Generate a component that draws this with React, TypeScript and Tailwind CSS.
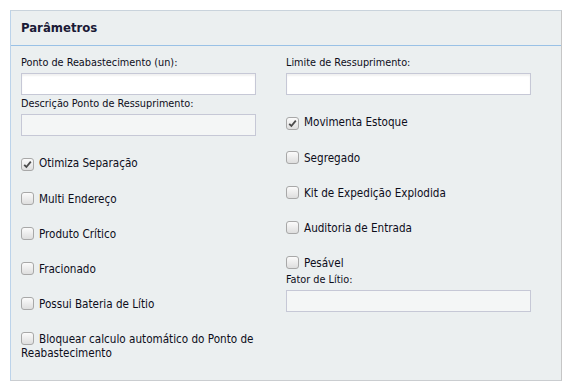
import React from 'react';

const FONT = { fontFamily: '"DejaVu Sans Condensed", "DejaVu Sans", sans-serif' };

const Box: React.FC<{ checked?: boolean }> = ({ checked }) => (
  <span className="inline-flex items-center justify-center w-[13px] h-[13px] mr-[5px] align-[-2px] rounded-[3px] border border-[#a8a8a8] bg-gradient-to-b from-[#fbfbfb] to-[#dedede]">
    {checked && (
      <svg width="9" height="9" viewBox="0 0 9 9">
        <path d="M1.2 4.8 L3.4 7 L7.8 1.6" fill="none" stroke="#4a4a4a" strokeWidth="1.8" />
      </svg>
    )}
  </span>
);

const Check: React.FC<{ label: React.ReactNode; checked?: boolean; className?: string }> = ({ label, checked, className }) => (
  <div className={`text-[11.6px] leading-[14px] text-[#0d0d1a] ${className ?? ''}`}>
    <Box checked={checked} />
    {label}
  </div>
);

const Label: React.FC<{ text: string; className?: string }> = ({ text, className }) => (
  <div className={`text-[10.8px] leading-[14px] text-[#0d0d1a] ${className ?? ''}`}>{text}</div>
);

const Field: React.FC<{ w: string; disabled?: boolean }> = ({ w, disabled }) => (
  <div
    className={`${w} h-[22px] mt-[3px] border border-[#c6c8d6] ${
      disabled ? 'bg-[#f4f6f6]' : 'bg-white shadow-[inset_0_2px_2px_rgba(0,0,0,0.06)]'
    }`}
  />
);

export default function App() {
  return (
    <div className="bg-white w-[573px] h-[392px] pt-[10px] pl-[10px]" style={FONT}>
      <div className="w-[552px] h-[371px] bg-[#ebeff0] border-t border-l border-r border-b border-t-[#c9d3dc] border-l-[#bcd3ea] border-r-[#c6c6c6] border-b-[#cacdd0]">
        {/* header */}
        <div className="h-[35px] border-b border-[#99c1e6] flex items-center px-[10px]">
          <span className="text-[13px] font-bold text-[#1a1a36]">Parâmetros</span>
        </div>

        <div className="grid grid-cols-[265px_265px] px-[10px] pt-[10px]">
          {/* left column */}
          <div>
            <Label text="Ponto de Reabastecimento (un):" />
            <Field w="w-[235px]" />
            <Label text="Descrição Ponto de Ressuprimento:" className="mt-[2px]" />
            <Field w="w-[235px]" disabled />
            <div className="mt-[20px] flex flex-col gap-[21px]">
              <Check label="Otimiza Separação" checked />
              <Check label="Multi Endereço" />
              <Check label="Produto Crítico" />
              <Check label="Fracionado" />
              <Check label="Possui Bateria de Lítio" />
              <Check
                label={
                  <>
                    Bloquear calculo automático do Ponto de
                    <br />
                    Reabastecimento
                  </>
                }
              />
            </div>
          </div>

          {/* right column */}
          <div>
            <Label text="Limite de Ressuprimento:" />
            <Field w="w-[245px]" />
            <div className="mt-[20px] flex flex-col gap-[21px]">
              <Check label="Movimenta Estoque" checked />
              <Check label="Segregado" />
              <Check label="Kit de Expedição Explodida" />
              <Check label="Auditoria de Entrada" />
              <div>
                <Check label="Pesável" />
                <Label text="Fator de Lítio:" className="mt-[3px]" />
                <Field w="w-[245px]" disabled />
              </div>
            </div>
          </div>
        </div>
      </div>
    </div>
  );
}
